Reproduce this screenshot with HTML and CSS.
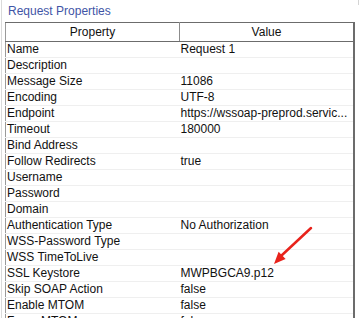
FILE: index.html
```html
<!DOCTYPE html>
<html>
<head>
    <title>Request Properties</title>
    <link rel="stylesheet" href="styles.css">
</head>
<body>
    <div class="panel">
        <div class="corner"></div>
        <h3 class="title">Request Properties</h3>
        <!-- Property table -->
        <table class="props">
            <colgroup>
                <col class="col-name">
                <col class="col-value">
            </colgroup>
            <thead>
                <tr>
                    <th>Property</th>
                    <th>Value</th>
                </tr>
            </thead>
            <tbody>
                <tr><td>Name</td><td>Request 1</td></tr>
                <tr><td>Description</td><td></td></tr>
                <tr><td>Message Size</td><td>11086</td></tr>
                <tr><td>Encoding</td><td>UTF-8</td></tr>
                <tr><td>Endpoint</td><td>https://wssoap-preprod.servic...</td></tr>
                <tr><td>Timeout</td><td>180000</td></tr>
                <tr><td>Bind Address</td><td></td></tr>
                <tr><td>Follow Redirects</td><td>true</td></tr>
                <tr><td>Username</td><td></td></tr>
                <tr><td>Password</td><td></td></tr>
                <tr><td>Domain</td><td></td></tr>
                <tr><td>Authentication Type</td><td>No Authorization</td></tr>
                <tr><td>WSS-Password Type</td><td></td></tr>
                <tr><td>WSS TimeToLive</td><td></td></tr>
                <tr><td>SSL Keystore</td><td>MWPBGCA9.p12</td></tr>
                <tr><td>Skip SOAP Action</td><td>false</td></tr>
                <tr><td>Enable MTOM</td><td>false</td></tr>
                <tr><td>Force MTOM</td><td>false</td></tr>
            </tbody>
        </table>

        <!-- Red annotation arrow -->
        <svg class="arrow" width="361" height="318" viewBox="0 0 361 318">
            <line x1="311" y1="228" x2="281" y2="256" stroke="#e8231c" stroke-width="2.5" stroke-linecap="round"/>
            <polygon points="274,264 278.6,251.8 285.6,259" fill="#e8231c"/>
        </svg>
    </div>
</body>
</html>
```

FILE: styles.css
```css
* {
    margin: 0;
    padding: 0;
}
body {
    background-color: white;
    font-family: "Liberation Sans", Arial, sans-serif;
    font-size: 12px;
    color: #111;
    overflow: hidden;
}
.panel {
    position: relative;
    margin-left: 1px;
    height: 318px;
    border-left: 1px solid #dadada;
}
.corner {
    position: absolute;
    top: 0;
    right: 2px;
    width: 1px;
    height: 5px;
    background-color: #d4d4d4;
}
.title {
    font-size: 12px;
    font-weight: normal;
    color: #3f55a6;
    height: 22px;
    line-height: 23px;
    padding-left: 6px;
}
.props {
    margin-left: 3px;
    width: 350px;
    table-layout: fixed;
    border-collapse: collapse;
    border-left: 1px solid #9a9a9a;
    border-right: 2px solid #6c6c6c;
}
.col-name {
    width: 174px;
}
.props th {
    height: 18px;
    font-weight: normal;
    text-align: center;
    border-top: 1px solid #6c6c6c;
    border-bottom: 1px solid #6c6c6c;
    border-right: 1px solid #8c8c8c;
    padding: 0;
}
.props td {
    height: 15px;
    line-height: 15px;
    padding: 0 0 0 1px;
    border-bottom: 1px solid #efefef;
    white-space: nowrap;
    overflow: hidden;
}
.arrow {
    position: absolute;
    top: 0;
    left: -2px;
}
```
